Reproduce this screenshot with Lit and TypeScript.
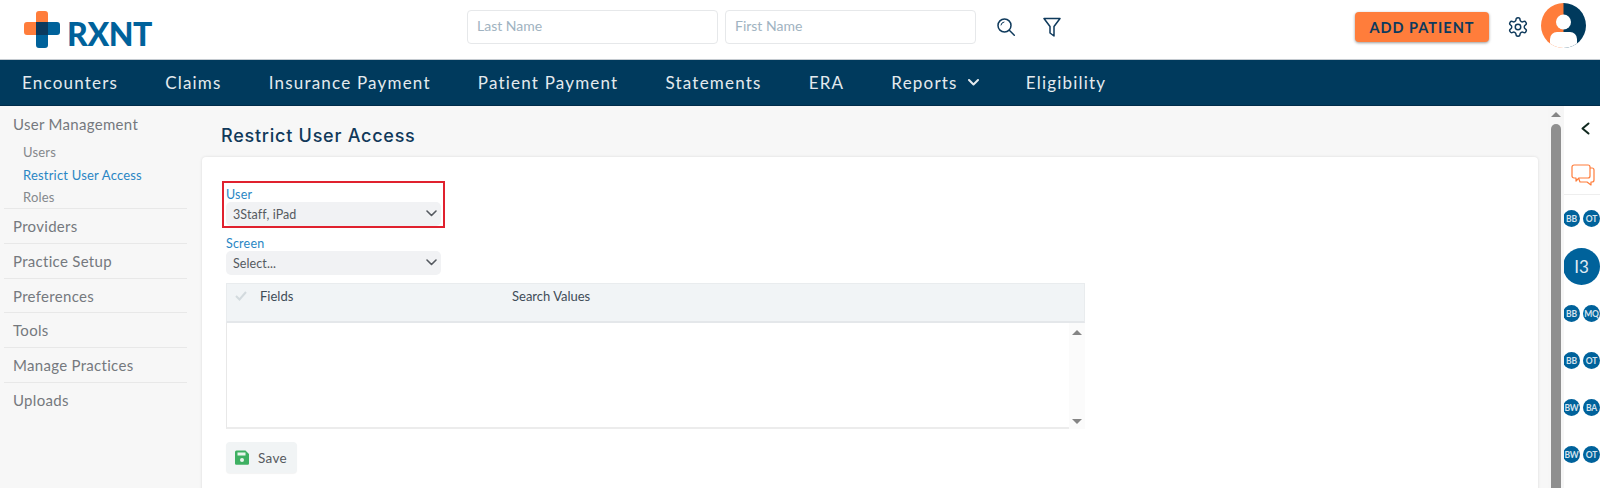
import { LitElement, html, css } from "lit";
import { customElement } from "lit/decorators.js";

const chevron = (w = 11, sw = 1.6) => html`<svg width=${w} height=${w * 0.64} viewBox="0 0 11 7" fill="none" stroke="currentColor" stroke-width=${sw} stroke-linecap="round" stroke-linejoin="round"><path d="M1 1l4.5 4.5L10 1"/></svg>`;

@customElement("app-root")
export class AppRoot extends LitElement {
  static styles = css`
    :host { display: block; width: 1600px; height: 488px; overflow: hidden; background: #f7f7f7; font-family: "Lato", "Open Sans", sans-serif; color: #4a4f55; }
    * { box-sizing: border-box; }
    .top { height: 60px; background: #fff; border-bottom: 1px solid #c4cad0; display: flex; align-items: center; position: relative; }
    .logo { display: flex; align-items: center; width: 467px; padding-left: 24px; height: 54px; margin-top: -1px; }
    .logo svg { display: block; }
    .logo b { margin-left: 6px; margin-top: 10px; font: 900 32px/36px "Lato", sans-serif; letter-spacing: -.4px; color: #00629b; }
    .search { display: flex; gap: 7px; margin-top: -5px; }
    .search div { width: 251px; height: 34px; border: 1px solid #e6e8ea; border-radius: 4px; padding: 0 9px; line-height: 30px; font-size: 14px; color: #9fb3c1; }
    .ico { color: #0f3a5c; display: block; }
    .i-search { margin: -5px 0 0 20px; }
    .i-filter { margin: -5px 0 0 27px; }
    .add { margin-left: 294px; margin-top: -5px; width: 134px; height: 30px; border-radius: 4px; background: #ff7d3b; color: #0c3a5e; font-weight: 700; font-size: 14.5px; letter-spacing: 1px; display: flex; align-items: center; justify-content: center; box-shadow: 0 1px 3px rgba(0,0,0,.4); }
    .i-gear { margin: -5px 0 0 18px; }
    .avatar { margin: -9px 0 0 12px; display: block; }
    nav { height: 46px; background: #003a5d; border-bottom: 1px solid #002c4a; display: flex; align-items: center; padding-left: 22px; gap: 47.1px; color: #e4eaee; font-size: 17px; letter-spacing: 1.2px; }
    nav span { display: flex; align-items: center; gap: 10px; white-space: nowrap; }
    .body { display: flex; height: 382px; }
    .side { width: 202px; padding: 7px 15px 0 4px; flex: none; color: #75797e; font-size: 15px; }
    .group { border-bottom: 1px solid #e8e8e8; padding: 0 0 0 9px; height: 34.8px; line-height: 34.8px; letter-spacing: .3px; }
    .group.open { height: 96px; }
    .group.last { border: 0; }
    .group .h { height: 28px; line-height: 22px; }
    .sub { font-size: 13px; line-height: 22.5px; padding-left: 10px; color: #85888c; letter-spacing: .2px; }
    .sub.on { color: #2a86c4; }
    .main { flex: 1; min-width: 0; padding-right: 10px; }
    h1 { margin: 0; padding-left: 19px; height: 51px; font: 500 18px/60px "Inter", sans-serif; color: #11395a; letter-spacing: .75px; }
    .card { background: #fff; border-radius: 4px; height: 340px; padding: 26px 20px 0 24px; box-shadow: 0 0 3px rgba(0,0,0,.12); }
    .field { width: 215px; position: relative; }
    .field label { display: block; font-size: 12.5px; line-height: 24px; color: #2a86c4; letter-spacing: .2px; height: 19px; }
    .sel { height: 24px; background: #f1f2f4; border-radius: 5px; display: flex; align-items: center; justify-content: space-between; padding: 0 4px 0 7px; font-size: 12.5px; color: #555a60; letter-spacing: .1px; }
    .user { margin-bottom: 6px; }
    .user::after { content: ""; position: absolute; inset: -2px -4px -2px -4px; border: 2px solid #e0212e; pointer-events: none; }
    .thead { margin-top: 8px; width: 859px; height: 40px; background: #f1f4f6; border: 1px solid #e9ecee; border-bottom: 2px solid #e4e7ea; display: flex; align-items: flex-start; font-size: 13px; color: #3f4c58; padding-top: 5px; line-height: 15px; }
    .thead .c { width: 33px; padding-left: 8px; color: #d3dade; }
    .thead .f { width: 252px; }
    .tbody { width: 859px; height: 106px; border-left: 1px solid #e8e8e8; border-bottom: 2px solid #ececec; display: flex; justify-content: flex-end; }
    .track { width: 16px; margin-bottom: -2px; background: #fbfbfb; display: flex; flex-direction: column; align-items: center; justify-content: space-between; padding: 7px 0 5px; }
    .tri-u, .tri-d { width: 0; height: 0; border-left: 5px solid transparent; border-right: 5px solid transparent; }
    .tri-u { border-bottom: 5px solid #858585; }
    .tri-d { border-top: 5px solid #858585; }
    .save { margin-top: 13px; width: 71px; height: 31px; background: #f1f4f5; border-radius: 4px; display: flex; align-items: center; gap: 9px; padding-left: 9px; font-size: 13.5px; color: #565a5e; letter-spacing: .3px; box-shadow: 0 1px 1px rgba(0,0,0,.05); }
    .sb { width: 16px; flex: none; background: #f6f6f6; display: flex; flex-direction: column; align-items: center; padding-top: 6px; }
    .sb .thumb { flex: 1; width: 10px; margin-top: 7px; background: #8f8f8f; border-radius: 5px 5px 0 0; }
    .rail { width: 36px; flex: none; background: #fff; overflow: hidden; display: flex; flex-direction: column; }
    .chev { height: 46px; display: flex; justify-content: flex-end; padding: 16px 10px 0 0; color: #10291f; }
    .chat { height: 43px; border-bottom: 1px solid #eee; display: flex; justify-content: flex-end; align-items: flex-end; padding: 0 5px 7px 0; }
    .row { display: flex; gap: 3px; height: 47px; align-items: center; margin-left: -1px; width: 48px; flex: none; }
    .dot { width: 17px; height: 17px; border-radius: 50%; background: #00629b; color: #d5e3ee; font-size: 8.5px; font-weight: 700; display: flex; align-items: center; justify-content: center; flex: none; overflow: hidden; letter-spacing: -.2px; }
    .big { width: 37px; height: 37px; border-radius: 50%; background: #00629b; color: #e0ecf3; font-size: 17px; display: flex; align-items: center; justify-content: center; margin-left: -1px; flex: none; }
    .bigwrap { height: 48px; display: flex; align-items: center; padding-top: 1px; flex: none; }
  `;

  render() {
    const rows = [["BB", "MQ"], ["BB", "OT"], ["BW", "BA"], ["BW", "OT"]];
    return html`
      <div class="top">
        <div class="logo">
          <svg width="37" height="37" viewBox="0 0 37 37">
            <path d="M12 3a3 3 0 0 1 3-3h6a3 3 0 0 1 3 3v21H3a3 3 0 0 1-3-3v-7a3 3 0 0 1 3-3h9z" fill="#ff7d3b"/>
            <path d="M12 11h21a3 3 0 0 1 3 3v7a3 3 0 0 1-3 3h-9v10a3 3 0 0 1-3 3h-6a3 3 0 0 1-3-3z" fill="#00629b"/>
            <rect x="12" y="11" width="12" height="13" fill="#0b3a5e"/>
          </svg>
          <b>RXNT</b>
        </div>
        <div class="search"><div>Last Name</div><div>First Name</div></div>
        <svg class="ico i-search" width="20" height="20" viewBox="0 0 20 20" fill="none" stroke="currentColor" stroke-width="1.5" stroke-linecap="round"><circle cx="8.5" cy="8.5" r="6.5"/><path d="M13.3 13.3l5 5"/><path d="M5 8a3.5 3.5 0 0 1 3-3" stroke-width="1"/></svg>
        <svg class="ico i-filter" width="18" height="21" viewBox="0 0 18 21" fill="none" stroke="currentColor" stroke-width="1.5" stroke-linejoin="round"><path d="M1 1.5h16l-6 8v9.5l-4-3v-6.5z"/></svg>
        <div class="add">ADD PATIENT</div>
        <svg class="ico i-gear" width="22" height="22" viewBox="0 0 24 24" fill="none" stroke="currentColor" stroke-width="1.6" stroke-linecap="round" stroke-linejoin="round"><path d="M12.22 2h-.44a2 2 0 0 0-2 2v.18a2 2 0 0 1-1 1.73l-.43.25a2 2 0 0 1-2 0l-.15-.08a2 2 0 0 0-2.73.73l-.22.38a2 2 0 0 0 .73 2.73l.15.1a2 2 0 0 1 1 1.72v.51a2 2 0 0 1-1 1.74l-.15.09a2 2 0 0 0-.73 2.73l.22.38a2 2 0 0 0 2.73.73l.15-.08a2 2 0 0 1 2 0l.43.25a2 2 0 0 1 1 1.73V20a2 2 0 0 0 2 2h.44a2 2 0 0 0 2-2v-.18a2 2 0 0 1 1-1.73l.43-.25a2 2 0 0 1 2 0l.15.08a2 2 0 0 0 2.73-.73l.22-.39a2 2 0 0 0-.73-2.73l-.15-.08a2 2 0 0 1-1-1.74v-.5a2 2 0 0 1 1-1.74l.15-.09a2 2 0 0 0 .73-2.73l-.22-.38a2 2 0 0 0-2.73-.73l-.15.08a2 2 0 0 1-2 0l-.43-.25a2 2 0 0 1-1-1.73V4a2 2 0 0 0-2-2z"/><circle cx="12" cy="12" r="3"/></svg>
        <svg class="avatar" width="45" height="45" viewBox="0 0 45 45">
          <defs><clipPath id="av"><circle cx="22.5" cy="22.5" r="22.5"/></clipPath></defs>
          <g clip-path="url(#av)">
            <rect width="23" height="45" fill="#ff7d3b"/>
            <rect x="22.5" width="23" height="45" fill="#003a5d"/>
            <circle cx="22.5" cy="19" r="7.5" fill="#fff"/>
            <rect x="9" y="29" width="27" height="18" rx="7" fill="#fff"/>
          </g>
        </svg>
      </div>
      <nav>
        <span>Encounters</span><span>Claims</span><span>Insurance Payment</span><span>Patient Payment</span><span>Statements</span><span>ERA</span><span>Reports ${chevron(11, 2)}</span><span>Eligibility</span>
      </nav>
      <div class="body">
        <div class="side">
          <div class="group open">
            <div class="h">User Management</div>
            <div class="sub">Users</div>
            <div class="sub on">Restrict User Access</div>
            <div class="sub">Roles</div>
          </div>
          ${["Providers", "Practice Setup", "Preferences", "Tools", "Manage Practices"].map((t) => html`<div class="group">${t}</div>`)}
          <div class="group last">Uploads</div>
        </div>
        <div class="main">
          <h1>Restrict User Access</h1>
          <div class="card">
            <div class="field user">
              <label>User</label>
              <div class="sel"><span>3Staff, iPad</span>${chevron()}</div>
            </div>
            <div class="field">
              <label>Screen</label>
              <div class="sel"><span>Select...</span>${chevron()}</div>
            </div>
            <div class="thead">
              <div class="c"><svg width="12" height="10" viewBox="0 0 12 10" fill="none" stroke="currentColor" stroke-width="2"><path d="M1 5l3.5 3.5L11 1"/></svg></div>
              <div class="f">Fields</div>
              <div>Search Values</div>
            </div>
            <div class="tbody"><div class="track"><div class="tri-u"></div><div class="tri-d"></div></div></div>
            <div class="save">
              <svg width="14" height="15" viewBox="0 0 14 15"><path d="M1.5 0.5h9L14 4v9.5a1.2 1.2 0 0 1-1.2 1.2H1.2A1.2 1.2 0 0 1 0 13.5V2a1.5 1.5 0 0 1 1.5-1.5z" fill="#3eb062"/><rect x="2.5" y="2.5" width="8" height="3" fill="#e8f5ec"/><circle cx="7" cy="10" r="2" fill="#e8f5ec"/></svg>
              Save
            </div>
          </div>
        </div>
        <div class="sb"><div class="tri-u"></div><div class="thumb"></div></div>
        <div class="rail">
          <div class="chev"><svg width="9" height="13" viewBox="0 0 9 13" fill="none" stroke="currentColor" stroke-width="2" stroke-linecap="round" stroke-linejoin="round"><path d="M7.5 1.5l-6 5 6 5"/></svg></div>
          <div class="chat">
            <svg width="24" height="23" viewBox="0 0 24 23" fill="none" stroke="#ff7d3b" stroke-width="1.2" stroke-linejoin="round"><path d="M3 1h14a2 2 0 0 1 2 2v9a2 2 0 0 1-2 2H8l-3 3v-3H3a2 2 0 0 1-2-2V3a2 2 0 0 1 2-2z"/><path d="M19 4h2a2 2 0 0 1 2 2v10a2 2 0 0 1-2 2h-1v3l-4-3H9l-1.5-4"/></svg>
          </div>
          <div class="row"><div class="dot">BB</div><div class="dot">OT</div></div>
          <div class="bigwrap"><div class="big">I3</div></div>
          ${rows.map((r) => html`<div class="row"><div class="dot">${r[0]}</div><div class="dot">${r[1]}</div></div>`)}
        </div>
      </div>
    `;
  }
}
